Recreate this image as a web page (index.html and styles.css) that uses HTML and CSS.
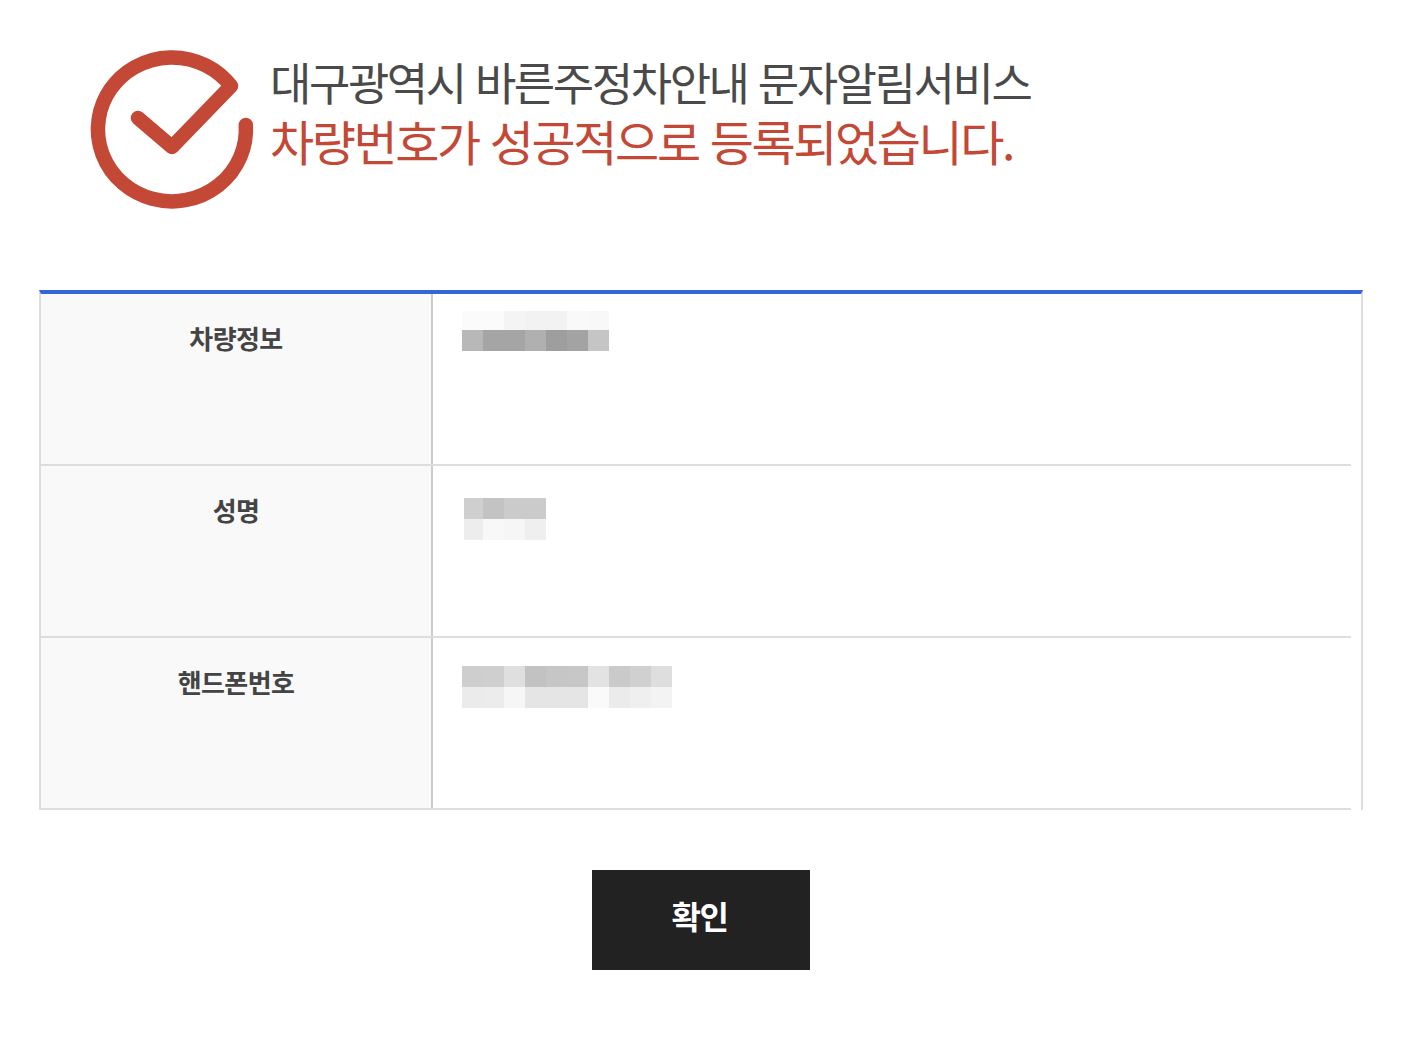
FILE: index.html
```html
<!DOCTYPE html>
<html lang="ko">
<head>
    <meta charset="UTF-8">
    <meta name="viewport" content="width=device-width, initial-scale=1.0">
    <title>바른주정차안내 문자알림서비스</title>
    <link rel="stylesheet" href="styles.css">
</head>
<body>
    <div class="page">
        <div class="result-head">
            <svg class="check-icon" width="162" height="158" viewBox="91 50 162 158" fill="none" stroke="#c34836" stroke-width="14.5" stroke-linecap="round" stroke-linejoin="round">
                <path d="M245.800 125 A74 72 0 1 1 231 86 L172 147 L138 118"/>
            </svg>
            <div class="result-text">
                <p class="service-name">대구광역시 바른주정차안내 문자알림서비스</p>
                <p class="result-msg">차량번호가 성공적으로 등록되었습니다.</p>
            </div>
        </div>

        <div class="info-box">
            <div class="info-row">
                <div class="info-label">차량정보</div>
                <div class="info-value">
                    <div class="mosaic mosaic-car">
                        <i class="s-fb"></i><i class="s-fb"></i><i class="s-f4"></i><i class="s-f2"></i><i class="s-f2"></i><i class="s-f9"></i><i class="s-f8"></i>
                        <i class="s-b8"></i><i class="s-a5"></i><i class="s-a5"></i><i class="s-b0"></i><i class="s-9e"></i><i class="s-a3"></i><i class="s-c5"></i>
                    </div>
                </div>
            </div>
            <div class="info-row">
                <div class="info-label">성명</div>
                <div class="info-value">
                    <div class="mosaic mosaic-name">
                        <i class="s-cf"></i><i class="s-c3"></i><i class="s-cb"></i><i class="s-cb"></i>
                        <i class="s-ed"></i><i class="s-f8"></i><i class="s-f6"></i><i class="s-ef"></i>
                    </div>
                </div>
            </div>
            <div class="info-row">
                <div class="info-label">핸드폰번호</div>
                <div class="info-value">
                    <div class="mosaic mosaic-phone">
                        <i class="s-ce"></i><i class="s-cf"></i><i class="s-df"></i><i class="s-c2"></i><i class="s-c6"></i><i class="s-c7"></i><i class="s-e3"></i><i class="s-ca"></i><i class="s-d0"></i><i class="s-de"></i>
                        <i class="s-eb"></i><i class="s-ec"></i><i class="s-f6"></i><i class="s-e5"></i><i class="s-e5"></i><i class="s-e5"></i><i class="s-fa"></i><i class="s-eb"></i><i class="s-ef"></i><i class="s-f3"></i>
                    </div>
                </div>
            </div>
        </div>

        <div class="btn-area">
            <button class="btn-ok" type="button">확인</button>
        </div>
    </div>
</body>
</html>
```

FILE: styles.css
```css
* {
    margin: 0;
    padding: 0;
    box-sizing: border-box;
    font-family: "Noto Sans CJK KR", "Noto Sans", sans-serif;
}

body {
    background: #fff;
}

.page {
    padding: 50px 39px 74px;
}

.result-head {
    display: flex;
    height: 158px;
    margin-left: 52px;
    margin-bottom: 82px;
}

.check-icon {
    flex: none;
    overflow: visible;
}

.result-text {
    margin-left: 17px;
    margin-top: 1px;
}

.service-name,
.result-msg {
    font-weight: 400;
    white-space: nowrap;
}

.service-name {
    color: #4a4a4a;
    font-size: 45px;
    line-height: 62px;
    letter-spacing: -2.45px;
}

.result-msg {
    color: #c34836;
    font-size: 48px;
    line-height: 54px;
    letter-spacing: -2.4px;
}

.info-box {
    border-top: 4px solid #3566d6;
    border-left: 2px solid #ddd;
    border-right: 2px solid #ddd;
    padding-right: 10px;
}

.info-row {
    display: flex;
    height: 172px;
    border-bottom: 2px solid #ddd;
}

.info-label {
    width: 392px;
    flex: none;
    padding-top: 25px;
    background: #f9f9f9;
    border-right: 2px solid #ccc;
    color: #444;
    font-size: 26px;
    line-height: 38px;
    font-weight: 700;
    letter-spacing: -0.6px;
    text-align: center;
}

.info-value {
    flex: 1;
    padding: 17px 0 0 29px;
}

.mosaic {
    display: grid;
    grid-auto-rows: 21px;
}

.mosaic i {
    display: block;
}

.mosaic-car {
    grid-template-columns: repeat(7, 21px);
    grid-template-rows: 19px 21px;
}

.mosaic-name {
    grid-template-columns: 19px repeat(3, 21px);
    margin: 15px 0 0 2px;
}

.mosaic-phone {
    grid-template-columns: repeat(10, 21px);
    margin-top: 11px;
}

.s-9e { background: #9e9e9e; }
.s-a3 { background: #a3a3a3; }
.s-a5 { background: #a5a5a5; }
.s-b0 { background: #b0b0b0; }
.s-b8 { background: #b8b8b8; }
.s-c2 { background: #c2c2c2; }
.s-c3 { background: #c3c3c3; }
.s-c5 { background: #c5c5c5; }
.s-c6 { background: #c6c6c6; }
.s-c7 { background: #c7c7c7; }
.s-ca { background: #cacaca; }
.s-cb { background: #cbcbcb; }
.s-ce { background: #cecece; }
.s-cf { background: #cfcfcf; }
.s-d0 { background: #d0d0d0; }
.s-de { background: #dedede; }
.s-df { background: #dfdfdf; }
.s-e3 { background: #e3e3e3; }
.s-e5 { background: #e5e5e5; }
.s-eb { background: #ebebeb; }
.s-ec { background: #ececec; }
.s-ed { background: #ededed; }
.s-ef { background: #efefef; }
.s-f2 { background: #f2f2f2; }
.s-f3 { background: #f3f3f3; }
.s-f4 { background: #f4f4f4; }
.s-f6 { background: #f6f6f6; }
.s-f8 { background: #f8f8f8; }
.s-f9 { background: #f9f9f9; }
.s-fa { background: #fafafa; }
.s-fb { background: #fbfbfb; }

.btn-area {
    margin-top: 60px;
    text-align: center;
}

.btn-ok {
    width: 218px;
    height: 100px;
    border: none;
    background: #222;
    color: #fff;
    font-size: 32px;
    font-weight: 700;
    letter-spacing: -1.5px;
    padding: 0 3px 10px 0;
}
```
